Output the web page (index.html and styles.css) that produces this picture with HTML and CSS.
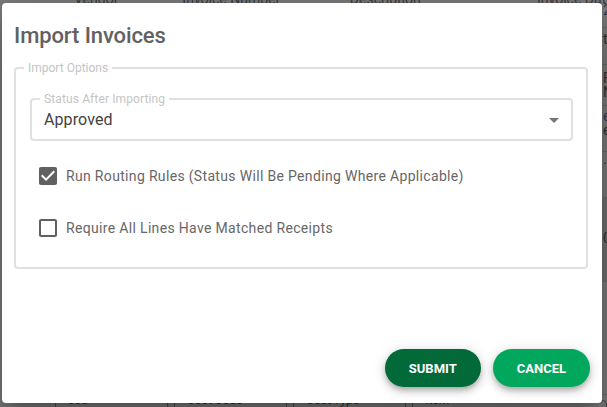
FILE: index.html
```html
<!DOCTYPE html>
<html>
<head>
<meta charset="utf-8">
<link rel="stylesheet" href="styles.css">
</head>
<body>
<div class="page">
  <div class="bg-top">
    <span class="bg-col c1">Vendor</span>
    <span class="bg-col c2">Invoice Number</span>
    <span class="bg-col c3">Description</span>
    <span class="bg-col c4">Invoice Date</span>
  </div>
  <div class="bg-mid">
    <div class="bg-fill"></div>
    <div class="bg-right">
      <div class="r-cell r1"><span class="link">2</span></div>
      <div class="r-cell r2">t</div>
      <div class="r-cell r3">F<br>N</div>
      <div class="r-cell r4"><span class="link">e</span><br>e</div>
      <div class="r-cell r5">.</div>
      <div class="r-cell r6 dark">0</div>
      <div class="r-cell r7"></div>
    </div>
  </div>
  <div class="bg-bottom">
    <fieldset class="bg-field f1"><legend>Job</legend></fieldset>
    <fieldset class="bg-field f2"><legend>Cost Code</legend></fieldset>
    <fieldset class="bg-field f3"><legend>Cost Type</legend></fieldset>
    <fieldset class="bg-field f4"><legend>Item</legend></fieldset>
  </div>
</div>

<div class="dialog">
  <h1 class="title">Import Invoices</h1>
  <fieldset class="group">
    <legend class="group-legend">Import Options</legend>
    <fieldset class="select">
      <legend class="select-legend">Status After Importing</legend>
      <div class="select-row">
        <span class="select-value">Approved</span>
        <span class="arrow"></span>
      </div>
    </fieldset>
    <div class="checks">
      <label class="check-row">
        <svg class="box" viewBox="0 0 24 24" width="24" height="24"><path fill="#616161" d="M19 3H5c-1.11 0-2 .9-2 2v14c0 1.1.89 2 2 2h14c1.11 0 2-.9 2-2V5c0-1.1-.89-2-2-2zm-9 14l-5-5 1.41-1.41L10 14.170l7.59-7.59L19 8l-9 9z"/></svg>
        <span class="check-label">Run Routing Rules (Status Will Be Pending Where Applicable)</span>
      </label>
      <label class="check-row">
        <svg class="box" viewBox="0 0 24 24" width="24" height="24"><path fill="#616161" d="M19 5v14H5V5h14m0-2H5c-1.1 0-2 .9-2 2v14c0 1.1.9 2 2 2h14c1.1 0 2-.9 2-2V5c0-1.1-.9-2-2-2z"/></svg>
        <span class="check-label">Require All Lines Have Matched Receipts</span>
      </label>
    </div>
  </fieldset>
  <div class="spacer"></div>
  <div class="actions">
    <button class="btn submit">Submit</button>
    <button class="btn cancel">Cancel</button>
  </div>
</div>
</body>
</html>
```

FILE: styles.css
```css
* { box-sizing: border-box; }
html, body {
  margin: 0;
  padding: 0;
  width: 607px;
  height: 407px;
  overflow: hidden;
  background: #7a7a7a;
  font-family: Roboto, "Liberation Sans", sans-serif;
}

/* dimmed page behind the dialog */
.page {
  height: 407px;
  display: flex;
  flex-direction: column;
  color: #303030;
  font-size: 14px;
}
.bg-top {
  height: 8px;
  display: flex;
  margin-top: -9px;
  padding-top: 0;
}
.bg-col { line-height: 16px; white-space: nowrap; color: #3a3a3a; }
.c1 { margin-left: 74px; width: 110px; }
.c2 { width: 170px; }
.c3 { width: 190px; }
.c4 { width: 70px; }
.bg-mid {
  flex: 1;
  display: flex;
}
.bg-fill { flex: 1; }
.bg-right {
  width: 5px;
  display: flex;
  flex-direction: column;
  overflow: hidden;
  font-size: 14px;
  line-height: 14px;
  color: #303030;
}
.r-cell {
  border-bottom: 1px solid #6a6a6a;
  padding-left: 1px;
  white-space: nowrap;
  overflow: hidden;
  flex: none;
}
.r1 { height: 29px; padding-top: 4px; }
.r2 { height: 37px; padding-top: 4px; }
.r3 { height: 41px; padding-top: 6px; }
.r4 { height: 46px; padding-top: 3px; }
.r5 { height: 46px; }
.r6 { height: 84px; padding-top: 33px; background: #6f6f6f; }
.r7 { flex: 1; }
.link { color: #2f3c55; }
.bg-bottom {
  height: 12px;
  display: flex;
  gap: 6px;
  padding-left: 55px;
}
.bg-field {
  margin: 0;
  padding: 0;
  height: 20px;
  border: 1px solid #4a4a4a;
  border-radius: 4px;
  min-width: 0;
}
.bg-field legend {
  font-size: 12px;
  line-height: 10px;
  padding: 0 3px;
  margin-left: 9px;
  color: #2c2c2c;
}
.f1 { width: 116px; }
.f2 { width: 116px; }
.f3 { width: 116px; }
.f4 { width: 200px; }

/* dialog */
.dialog {
  position: absolute;
  left: 2px;
  top: 3px;
  width: 600px;
  height: 400px;
  background: #fff;
  border-radius: 4px;
  box-shadow: 0 11px 15px -7px rgba(0,0,0,.2), 0 24px 38px 3px rgba(0,0,0,.14), 0 9px 46px 8px rgba(0,0,0,.12);
  padding: 17px 12px 16px 12px;
  display: flex;
  flex-direction: column;
}
.title {
  margin: 0;
  font-size: 22px;
  line-height: 32px;
  font-weight: 500;
  letter-spacing: -0.1px;
  color: #616161;
}
.group {
  margin: 9px 2px 0 0;
  padding: 17px 7px 13px 8px;
  border: 2px solid #e0e0e0;
  border-radius: 4px;
  min-width: 0;
}
.group-legend,
.select-legend {
  padding: 0 4px;
  font-size: 12px;
  line-height: 14px;
  color: #c4c4c4;
}
.select-legend { letter-spacing: 0.12px; }
.select {
  margin: 0 6px;
  padding: 0 8px 7px 8px;
  border: 2px solid #e0e0e0;
  border-radius: 4px;
  min-width: 0;
}
.select-row {
  display: flex;
  align-items: center;
  justify-content: space-between;
  padding: 2px 4px 0 4px;
  height: 26px;
}
.select-value {
  font-size: 16px;
  line-height: 24px;
  letter-spacing: 0.1px;
  color: #424242;
}
.arrow {
  width: 0;
  height: 0;
  border-left: 5px solid transparent;
  border-right: 5px solid transparent;
  border-top: 5px solid #757575;
}
.checks {
  margin-top: 9px;
  padding-left: 12px;
  display: flex;
  flex-direction: column;
}
.check-row {
  height: 52px;
  display: flex;
  align-items: center;
  gap: 6px;
}
.box { display: block; flex: none; }
.check-label {
  font-size: 14px;
  line-height: 20px;
  letter-spacing: 0.33px;
  color: #676767;
}
.spacer { flex: 1; }
.actions {
  display: flex;
  justify-content: flex-end;
  gap: 12px;
}
.btn {
  height: 38px;
  padding: 0 24px;
  border: 0;
  border-radius: 19px;
  font-family: Roboto, "Liberation Sans", sans-serif;
  font-size: 13px;
  font-weight: 700;
  letter-spacing: 0;
  text-transform: uppercase;
  color: #fff;
  box-shadow: 0 3px 5px -1px rgba(0,0,0,.2), 0 5px 8px 0 rgba(0,0,0,.14), 0 1px 14px 0 rgba(0,0,0,.12);
}
.submit { background: #026a39; }
.cancel { background: #01a75d; }
```
